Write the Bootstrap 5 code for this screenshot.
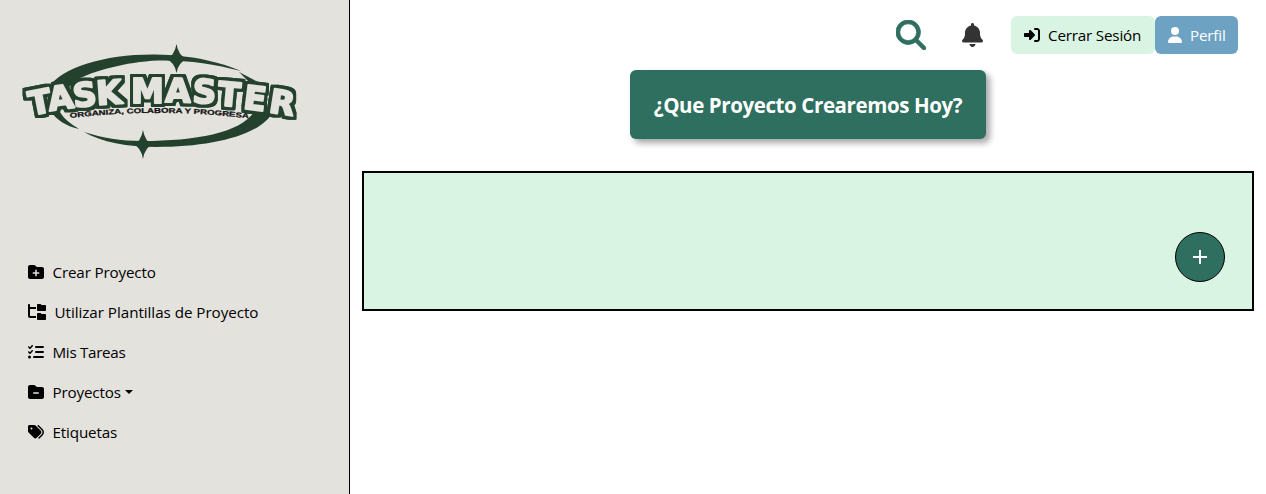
<!DOCTYPE html>
<html lang="es">
<head>
<meta charset="utf-8">
<meta name="viewport" content="width=device-width, initial-scale=1">
<title>Task Master</title>
<link rel="stylesheet" href="https://cdn.jsdelivr.net/npm/bootstrap@5.3.0/dist/css/bootstrap.min.css">
<style>
body{font-family:"Open Sans","Noto Sans",sans-serif;font-size:15.2px;line-height:24px;color:#000;background:#fff}
svg{fill:currentColor;flex:none}
.sidebar{width:350px;background:#e3e2dd;border-right:1px solid #000}
.side-link{height:40px;color:#000;padding-left:28px;letter-spacing:-.15px}
.side-link svg{margin-right:8.5px}
.side-wide{letter-spacing:-.04px}
.side-tight{letter-spacing:-.3px}
.logo{display:block;margin-bottom:52px}
.word{font:bold 33px "DejaVu Sans",sans-serif;fill:#e3e2dd;stroke:#e3e2dd;stroke-width:2;stroke-linejoin:round}
.slogan{font:bold 7px "Liberation Sans",sans-serif;fill:#111;stroke:#111;stroke-width:.25}
.caret{border:4.8px solid transparent;border-top-color:#000;border-bottom:0;margin-left:4px}
.topbar{height:54px;padding:16px 16px 0 0}
.search-icon{color:#2e6f60;margin-right:20px}
.bell-icon{color:#333}
.tool-btn{height:38px;padding:0 13px;border:0;border-radius:6px;font-size:15.2px;letter-spacing:-.18px}
.btn-exit,.btn-exit:hover{background:#d9f4e3;color:#000;width:144px}
.btn-profile,.btn-profile:hover{background:#6ea2c2;color:#fff;width:83px}
.banner{width:356px;height:69px;padding-top:2px;background:#2e6f60;border-radius:6px;box-shadow:4px 4px 6px rgba(0,0,0,.35);font-size:20.5px;font-weight:700;letter-spacing:-.4px}
.board{height:140px;margin-top:32px;border:2px solid #000;background:#d9f4e3;padding:59px 27px 0 0}
.btn-add,.btn-add:hover{width:50px;height:50px;background:#2e6f60;border:1px solid #000;color:#fff}
</style>
</head>
<body>
<div class="d-flex min-vh-100">
<aside class="sidebar flex-shrink-0">
<svg class="logo" width="349" height="200" viewBox="0 0 349 200" role="img" aria-label="Task Master">
<defs>
<filter id="outline" x="-5%" y="-20%" width="110%" height="140%" color-interpolation-filters="sRGB"><feMorphology in="SourceAlpha" operator="dilate" radius="3" result="fat"/><feGaussianBlur in="fat" stdDeviation=".5" result="soft"/><feFlood flood-color="#24412e"/><feComposite in2="soft" operator="in" result="edge"/><feMerge><feMergeNode in="edge"/><feMergeNode in="edge"/><feMergeNode in="SourceGraphic"/></feMerge></filter>
<path id="arc" d="M70 118Q160 107.500 249 118.500"/>
</defs>
<g fill="#24412e">
<path d="M48 88C62 67 106 54 155 54.500C194 55 222 63 241 71C213 64 189 60 158 60.500C125 62 94 71 76 80L62 94Z"/>
<path d="M239 72L258 82L248 81Z"/>
<path d="M51 111L60 112C64 119 71 124 79 129C66 126 56 120 51 111Z"/>
<path d="M84 132C103 138 120 141 143 141C195 141 240 133 254 112L273 112C260 136 210 147 156 147C128 147 101 142 84 132Z"/>
<path d="M176.500 44Q178.500 56 187 59Q178.500 62 176.500 73Q174.500 62 166 59Q174.500 56 176.500 44Z"/>
<path d="M143 130Q145 142 153 144.500Q145 147 143 159Q141 147 133 144.500Q141 142 143 130Z"/>
</g>
<g filter="url(#outline)"><text class="word" x="31 49.500 74 97 131 165 192 217 242.500 268" y="115.500 111 107.500 105 102.500 102 102.500 105 108.500 112" rotate="-11 -8 -6 -4 0 1 3 5 7 9">TASKMASTER</text></g>
<text class="slogan"><textPath href="#arc" textLength="179" lengthAdjust="spacingAndGlyphs">ORGANIZA, COLABORA Y PROGRESA</textPath></text>
</svg>
<nav class="d-flex flex-column">
<a class="side-link d-flex align-items-center text-decoration-none" href="#"><svg width="16" height="16" viewBox="0 0 512 512"><path d="M512 416c0 35-29 64-64 64H64c-35 0-64-29-64-64V96c0-35 29-64 64-64h128c20 0 39 9 51 26l19 25c6 8 16 13 26 13h160c35 0 64 29 64 64zM232 376c0 13 11 24 24 24s24-11 24-24v-64h64c13 0 24-11 24-24s-11-24-24-24h-64v-64c0-13-11-24-24-24s-24 11-24 24v64h-64c-13 0-24 11-24 24s11 24 24 24h64z"/></svg>Crear Proyecto</a>
<a class="side-link side-wide d-flex align-items-center text-decoration-none" href="#"><svg width="18" height="16" viewBox="0 0 576 512"><path d="M64 32C64 14 50 0 32 0S0 14 0 32v352c0 35 29 64 64 64h192v-64H64V160h192V96H64zM288 192c0 18 14 32 32 32h224c18 0 32-14 32-32V64c0-18-14-32-32-32H445c-8 0-16-3-22-9L409 9c-6-6-14-9-23-9h-66c-18 0-32 14-32 32zm0 288c0 18 14 32 32 32h224c18 0 32-14 32-32V352c0-18-14-32-32-32h-99c-8 0-16-3-22-9l-14-14c-6-6-14-9-23-9h-66c-18 0-32 14-32 32z"/></svg>Utilizar Plantillas de Proyecto</a>
<a class="side-link side-tight d-flex align-items-center text-decoration-none" href="#"><svg width="16" height="16" viewBox="0 0 512 512"><path d="M152 38c10 9 11 24 2 34l-72 80c-9 10-25 11-35 1L7 113c-9-9-9-25 0-34s25-9 34 0l22 22 55-61c9-10 24-11 34-2zm0 160c10 9 11 24 2 34l-72 80c-9 10-25 11-35 1L7 273c-9-9-9-25 0-34s25-9 34 0l22 22 55-61c9-10 24-11 34-2zM256 64h224a32 32 0 0 1 0 64H256a32 32 0 0 1 0-64zm0 160h224a32 32 0 0 1 0 64H256a32 32 0 0 1 0-64zm-64 160h288a32 32 0 0 1 0 64H192a32 32 0 0 1 0-64zM48 368a48 48 0 1 1 0 96 48 48 0 0 1 0-96z"/></svg>Mis Tareas</a>
<a class="side-link d-flex align-items-center text-decoration-none" href="#"><svg width="16" height="16" viewBox="0 0 512 512"><path d="M448 480H64c-35 0-64-29-64-64V96c0-35 29-64 64-64h128c20 0 39 9 51 26l19 25c6 8 16 13 26 13h160c35 0 64 29 64 64v256c0 35-29 64-64 64zM184 264c-13 0-24 11-24 24s11 24 24 24h144c13 0 24-11 24-24s-11-24-24-24z"/></svg>Proyectos<span class="caret"></span></a>
<a class="side-link d-flex align-items-center text-decoration-none" href="#"><svg width="16" height="16" viewBox="0 0 512 512"><path d="M345 39l128 130c52 53 52 138 0 190l-104 106c-9 9-25 9-34 0s-9-24 0-34l104-105c34-34 34-89 0-123L311 73c-9-9-9-25 0-34s25-9 34 0zM0 229V80c0-26 21-48 48-48h149c17 0 34 7 46 19l168 168c25 25 25 65 0 90L277 443c-25 25-65 25-90 0L19 275C7 263 0 246 0 229zm144-85a32 32 0 1 0-64 0 32 32 0 0 0 64 0z"/></svg>Etiquetas</a>
</nav>
</aside>
<main class="flex-grow-1 px-2 mx-1">
<header class="topbar d-flex align-items-center justify-content-end">
<svg width="30" height="30" viewBox="0 0 512 512" class="search-icon"><path d="M416 208c0 46-15 88-40 123l127 126c12 13 12 33 0 46s-33 12-46 0L331 376c-35 25-77 40-123 40C93 416 0 323 0 208S93 0 208 0s208 93 208 208zM208 352a144 144 0 1 0 0-288 144 144 0 0 0 0 288z" stroke="currentColor" stroke-width="14"/></svg>
<svg width="21" height="24" viewBox="0 0 448 512" class="bell-icon ms-3 me-4"><path d="M224 0c-18 0-32 14-32 32v19C119 66 64 131 64 208v19c0 47-17 92-48 127l-8 9c-8 9-10 22-5 33s16 20 29 20h384c13 0 24-8 29-20s3-24-5-33l-8-9c-31-35-48-80-48-127v-19c0-77-55-142-128-157V32c0-18-14-32-32-32zm45 493c12-12 19-28 19-45H160c0 17 7 33 19 45s28 19 45 19 33-7 45-19z"/></svg>
<button class="btn tool-btn btn-exit d-flex align-items-center ms-1" type="button"><svg width="16" height="16" viewBox="0 0 512 512" class="me-2"><path d="M217.900 105.900L340.700 228.700c7.200 7.200 11.300 17.100 11.300 27.300s-4.100 20.100-11.300 27.300L217.900 406.100c-6.400 6.400-15 9.900-24 9.900-18.700 0-33.900-15.200-33.900-33.900V320H32c-17.700 0-32-14.300-32-32v-64c0-17.700 14.300-32 32-32h128v-62.100C160 111.200 175.200 96 193.900 96c9 0 17.600 3.600 24 9.900zM352 416h64c17.700 0 32-14.300 32-32V128c0-17.700-14.300-32-32-32h-64a32 32 0 0 1 0-64h64c53 0 96 43 96 96v256c0 53-43 96-96 96h-64a32 32 0 0 1 0-64z"/></svg>Cerrar Sesión</button>
<button class="btn tool-btn btn-profile d-flex align-items-center" type="button"><svg width="14" height="16" viewBox="0 0 448 512" class="me-2"><path d="M224 256a128 128 0 1 0 0-256 128 128 0 0 0 0 256zm-46 48C80 304 0 384 0 482c0 17 13 30 30 30h388c17 0 30-13 30-30 0-98-80-178-178-178z"/></svg>Perfil</button>
</header>
<h1 class="banner d-flex align-items-center justify-content-center text-white mx-auto mt-3 mb-0">¿Que Proyecto Crearemos Hoy?</h1>
<section class="board d-flex justify-content-end align-items-start">
<button class="btn btn-add rounded-circle d-flex align-items-center justify-content-center p-0" type="button" aria-label="Agregar"><svg width="14" height="14" viewBox="0 0 14 14"><path d="M6 0h2v6h6v2H8v6H6V8H0V6h6z"/></svg></button>
</section>
</main>
</div>
<script src="https://cdn.jsdelivr.net/npm/bootstrap@5.3.0/dist/js/bootstrap.bundle.min.js"></script>
</body>
</html>
